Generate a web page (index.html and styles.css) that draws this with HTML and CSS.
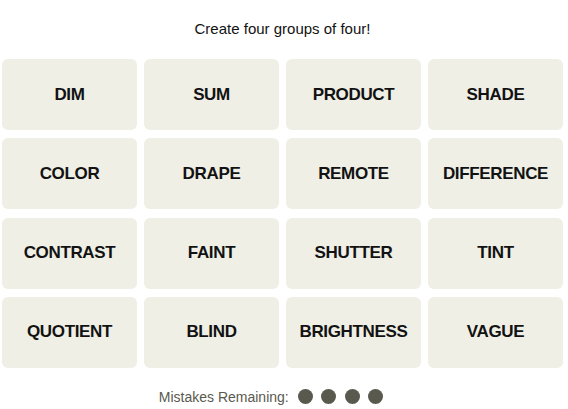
FILE: index.html
```html
<!DOCTYPE html>
<html>
<head>
<meta charset="utf-8">
<link rel="stylesheet" href="styles.css">
</head>
<body>
<main class="game">
  <p class="prompt">Create four groups of four!</p>
  <div class="board">
    <button class="tile">DIM</button>
    <button class="tile">SUM</button>
    <button class="tile">PRODUCT</button>
    <button class="tile">SHADE</button>
    <button class="tile">COLOR</button>
    <button class="tile">DRAPE</button>
    <button class="tile">REMOTE</button>
    <button class="tile">DIFFERENCE</button>
    <button class="tile">CONTRAST</button>
    <button class="tile">FAINT</button>
    <button class="tile">SHUTTER</button>
    <button class="tile">TINT</button>
    <button class="tile">QUOTIENT</button>
    <button class="tile">BLIND</button>
    <button class="tile">BRIGHTNESS</button>
    <button class="tile">VAGUE</button>
  </div>
  <div class="mistakes">
    <span class="mistakes-label">Mistakes Remaining:</span>
    <span class="dots">
      <span class="dot"></span><span class="dot"></span><span class="dot"></span><span class="dot"></span>
    </span>
  </div>
</main>
</body>
</html>
```

FILE: styles.css
```css
html, body {
  margin: 0;
  padding: 0;
  background: #ffffff;
}

.game {
  width: 568px;
  padding: 0 5px 0 2px;
  box-sizing: border-box;
  font-family: "Liberation Sans", Arial, sans-serif;
}

.prompt {
  margin: 0;
  padding-top: 20px;
  height: 59px;
  box-sizing: border-box;
  text-align: center;
  font-size: 15px;
  line-height: 18px;
  color: #121212;
}

.board {
  display: grid;
  grid-template-columns: repeat(4, 1fr);
  grid-auto-rows: 71px;
  column-gap: 7px;
  row-gap: 8.33px;
}

.tile {
  border: none;
  margin: 0;
  padding: 0;
  background: #efefe6;
  border-radius: 6px;
  font-family: "Liberation Sans", Arial, sans-serif;
  font-weight: 700;
  font-size: 17px;
  letter-spacing: -0.35px;
  color: #121212;
  text-transform: uppercase;
  display: flex;
  align-items: center;
  justify-content: center;
}

.mistakes {
  display: flex;
  align-items: center;
  justify-content: center;
  padding-right: 23px;
  margin-top: 20px;
  height: 18px;
  gap: 9px;
}

.mistakes-label {
  font-size: 14px;
  color: #5a594e;
}

.dots {
  display: flex;
  gap: 8.5px;
}

.dot {
  width: 15px;
  height: 15px;
  border-radius: 50%;
  background: #5a594e;
}
```
